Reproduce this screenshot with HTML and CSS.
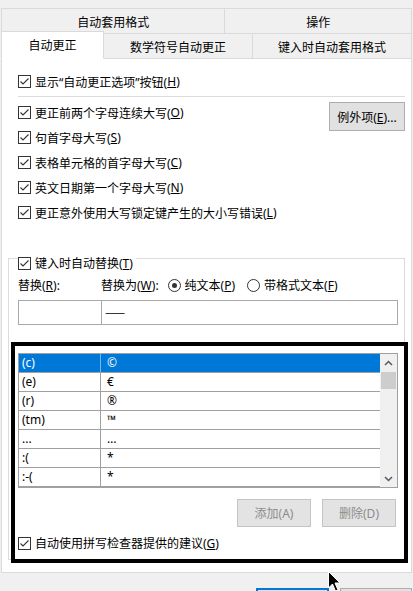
FILE: index.html
```html
<!DOCTYPE html>
<html lang="zh-CN">
<head>
    <meta charset="UTF-8">
    <title>自动更正</title>
    <link rel="stylesheet" href="styles.css">
</head>
<body>
    <svg class="defs" width="0" height="0">
        <symbol id="cb" viewBox="0 0 13 13">
            <rect x="0.5" y="0.5" width="12" height="12" fill="#fff" stroke="#333"/>
            <path d="M2.5 6.5 L5 9 L10.5 3.5" fill="none" stroke="#333" stroke-width="1.1"/>
        </symbol>
    </svg>

    <div class="dialog">
        <div class="tabrow">
            <div class="tab w-format">自动套用格式</div>
            <div class="tab w-action">操作</div>
        </div>
        <div class="tabrow second">
            <div class="tab active w-auto">自动更正</div>
            <div class="tab w-math">数学符号自动更正</div>
            <div class="tab w-type">键入时自动套用格式</div>
        </div>

        <div class="panel">
            <div class="opt top-opt"><svg class="check"><use href="#cb"/></svg>显示“自动更正选项”按钮(<u>H</u>)</div>
            <div class="sep"></div>

            <div class="caps">
                <div class="caps-list">
                    <div class="opt"><svg class="check"><use href="#cb"/></svg>更正前两个字母连续大写(<u>O</u>)</div>
                    <div class="opt"><svg class="check"><use href="#cb"/></svg>句首字母大写(<u>S</u>)</div>
                    <div class="opt"><svg class="check"><use href="#cb"/></svg>表格单元格的首字母大写(<u>C</u>)</div>
                    <div class="opt"><svg class="check"><use href="#cb"/></svg>英文日期第一个字母大写(<u>N</u>)</div>
                    <div class="opt"><svg class="check"><use href="#cb"/></svg>更正意外使用大写锁定键产生的大小写错误(<u>L</u>)</div>
                </div>
                <button class="btn except">例外项(<u>E</u>)...</button>
            </div>

            <div class="group">
                <div class="opt legend"><svg class="check"><use href="#cb"/></svg>键入时自动替换(<u>T</u>)</div>

                <div class="replace-head">
                    <span class="lbl-from">替换(<u>R</u>):</span>
                    <span class="lbl-to">替换为(<u>W</u>):</span>
                    <span class="radio on"></span><span class="radio-text">纯文本(<u>P</u>)</span>
                    <span class="radio"></span><span class="radio-text">带格式文本(<u>F</u>)</span>
                </div>

                <div class="replace-fields">
                    <div class="field from"></div>
                    <div class="field to">——</div>
                </div>

                <div class="list">
                    <div class="rows">
                        <div class="row selected"><span>(c)</span><span>©</span></div>
                        <div class="row"><span>(e)</span><span>€</span></div>
                        <div class="row"><span>(r)</span><span>®</span></div>
                        <div class="row"><span>(tm)</span><span>™</span></div>
                        <div class="row"><span>...</span><span>…</span></div>
                        <div class="row"><span>:(</span><span>*</span></div>
                        <div class="row"><span>:-(</span><span>*</span></div>
                    </div>
                    <div class="scroll">
                        <div class="arrow">
                            <svg width="9" height="6" viewBox="0 0 9 6"><path d="M1 5 L4.5 1.5 L8 5" fill="none" stroke="#5b5566" stroke-width="1.5"/></svg>
                        </div>
                        <div class="thumb"></div>
                        <div class="arrow down">
                            <svg width="9" height="6" viewBox="0 0 9 6"><path d="M1 1 L4.5 4.5 L8 1" fill="none" stroke="#5b5566" stroke-width="1.5"/></svg>
                        </div>
                    </div>
                </div>

                <div class="list-actions">
                    <button class="btn" disabled>添加(A)</button>
                    <button class="btn" disabled>删除(D)</button>
                </div>

                <div class="opt last-opt"><svg class="check"><use href="#cb"/></svg>自动使用拼写检查器提供的建议(<u>G</u>)</div>
            </div>
        </div>

        <div class="footer">
            <button class="btn ok"></button>
            <button class="btn"></button>
        </div>
    </div>

    <!-- black outline around the replacement list -->
    <div class="highlight"></div>

    <svg class="cursor" width="13" height="21" viewBox="0 0 13 21">
        <path d="M0.5 0.5 L0.5 17 L4.5 13 L7.5 20 L10 19 L7 12 L12 12 Z" fill="#000" stroke="#fff" stroke-width="1"/>
    </svg>
</body>
</html>
```

FILE: styles.css
```css
html, body { margin: 0; height: 591px; overflow: hidden; }
body { background: #f0f0f0; font-family: "Noto Sans", "Noto Sans CJK SC", sans-serif; font-size: 12px; color: #000; position: relative; }
.defs { position: absolute; }
u { text-underline-offset: 1px; }

.dialog { margin-left: 1px; width: 411px; padding-top: 8px; }

/* tabs */
.tabrow { display: flex; align-items: flex-end; }
.tabrow.second { margin-top: -1px; }
.tab { box-sizing: border-box; height: 26px; border: 1px solid #dadada; margin-left: -1px; background: #f0f0f0; display: flex; align-items: center; justify-content: center; padding-top: 1px; }
.tab:first-child { margin-left: 0; }
.w-format { width: 225px; }
.w-action { width: 188px; }
.w-auto { width: 103px; }
.w-math { width: 150px; }
.w-type { width: 160px; }
.tab.active { background: #fff; height: 28px; margin-top: -2px; border-bottom-color: #fff; position: relative; z-index: 1; padding-top: 0; }

.panel { background: #fff; border: 1px solid #dadada; border-top: none; padding: 10px 6px 12px 6px; }

.opt { display: flex; align-items: center; height: 25px; white-space: nowrap; }
.check { width: 13px; height: 13px; margin-right: 4px; flex: none; }
.top-opt { padding-left: 10px; }
.sep { height: 1px; background: #dcdcdc; margin: 2px 0 0 10px; }

.caps { display: flex; margin-top: 3px; }
.caps-list { flex: 1; padding-left: 10px; }

.btn { font: inherit; color: #000; background: #e1e1e1; border: 1px solid #adadad; padding: 0; box-sizing: border-box; }
.btn:disabled { color: #8c8c8c; background: #e3e3e3; border-color: #c4c4c4; }
.except { width: 76px; height: 29px; margin-top: 2px; }

/* replacement group box */
.group { border: 1px solid #dcdcdc; margin-top: 33px; padding: 0 6px 6px 9px; }
.legend { height: 22px; margin-top: -7px; width: fit-content; background: #fff; padding-right: 3px; }

.replace-head { display: flex; align-items: center; height: 18px; margin-top: 2px; white-space: nowrap; }
.lbl-from { width: 83px; }
.lbl-to { margin-right: 9px; }
.radio { width: 13px; height: 13px; box-sizing: border-box; border: 1px solid #333; border-radius: 50%; margin-right: 4px; position: relative; flex: none; }
.radio.on::after { content: ""; position: absolute; left: 3px; top: 3px; width: 5px; height: 5px; border-radius: 50%; background: #333; }
.radio-text { margin-right: 12px; }

.replace-fields { display: flex; margin-top: 6px; }
.field { box-sizing: border-box; height: 25px; border: 1px solid #a9a9a9; background: #fff; }
.field.from { width: 84px; }
.field.to { flex: 1; margin-left: -1px; padding: 2px 0 0 3px; font-family: "Noto Sans CJK SC", sans-serif; }

.list { display: flex; border: 1px solid #a0a0a0; margin-top: 28px; }
.rows { flex: 1; }
.row { display: flex; box-sizing: border-box; height: 19px; border-bottom: 1px solid #a0a0a0; line-height: 18px; }
.row span:first-child { width: 82px; padding-left: 3px; box-sizing: border-box; border-right: 1px solid #a0a0a0; }
.row span:last-child { padding-left: 6px; }
.row.selected { background: #0078d7; color: #fff; }
.row.selected span:first-child { border-right-color: #7fb4e6; }

.scroll { width: 17px; background: #f0f0f0; display: flex; flex-direction: column; }
.arrow { height: 17px; display: flex; align-items: center; justify-content: center; }
.thumb { height: 17px; margin: 1px 1px 0; background: #cdcdcd; }
.arrow.down { margin-top: auto; }

.list-actions { display: flex; justify-content: flex-end; gap: 11px; margin: 11px 2px 0 0; }
.list-actions .btn { width: 74px; height: 28px; }
.last-opt { height: 20px; margin-top: 6px; }

.footer { display: flex; gap: 11px; margin-top: 15px; padding-left: 255px; }
.footer .btn { width: 74px; height: 23px; }
.footer .ok { border: 2px solid #0078d7; }

.highlight { position: absolute; left: 11px; top: 342px; width: 397px; height: 221px; box-sizing: border-box; border: 4px solid #000; }
.cursor { position: absolute; left: 328px; top: 571px; }
```
